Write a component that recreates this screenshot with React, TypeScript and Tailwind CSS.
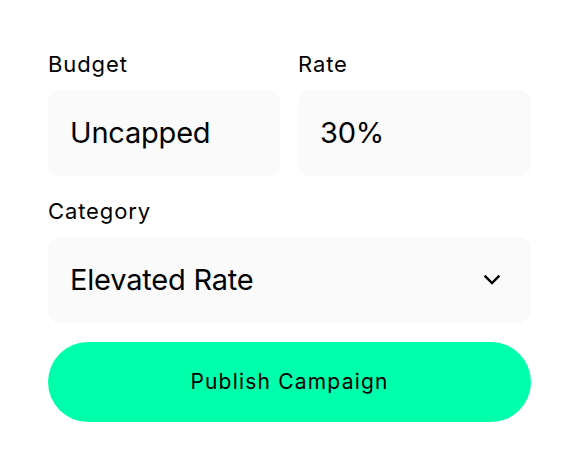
import React from "react";

function Field({ label, value, className = "" }: { label: string; value: string; className?: string }) {
  return (
    <div className={"flex flex-col gap-[14px] " + className}>
      <div className="text-[22px] leading-[24px] text-black tracking-[0.9px]">{label}</div>
      <div className="h-[86px] rounded-[12px] bg-[#fafafa] flex items-center px-[22px] text-[29px] text-black tracking-[-0.2px]">
        {value}
      </div>
    </div>
  );
}

export default function App() {
  return (
    <div
      className="w-[579px] h-[471px] bg-white pt-[52px] px-[48px] flex flex-col"
      style={{ fontFamily: "Inter, 'Noto Sans', sans-serif" }}
    >
      <div className="flex gap-[18px] w-[483px]">
        <Field label="Budget" value="Uncapped" className="w-[232px]" />
        <Field label="Rate" value="30%" className="w-[233px]" />
      </div>
      <div className="mt-[23px] flex flex-col gap-[14px] w-[483px]">
        <div className="text-[22px] leading-[24px] text-black tracking-[0.9px]">Category</div>
        <div className="h-[86px] rounded-[12px] bg-[#fafafa] flex items-center justify-between pl-[22px] pr-[31px] text-[29px] text-black tracking-[-0.2px]">
          <span>Elevated Rate</span>
          <svg width="16" height="10" viewBox="0 0 16 10" fill="none">
            <path d="M1.5 1.5 L8 8 L14.5 1.5" stroke="black" strokeWidth="2.4" strokeLinecap="square" strokeLinejoin="miter" />
          </svg>
        </div>
      </div>
      <button className="mt-[19px] w-[483px] h-[80px] rounded-full bg-[#00ffaa] text-[21px] text-black tracking-[1.2px] flex items-center justify-center">
        Publish Campaign
      </button>
    </div>
  );
}
